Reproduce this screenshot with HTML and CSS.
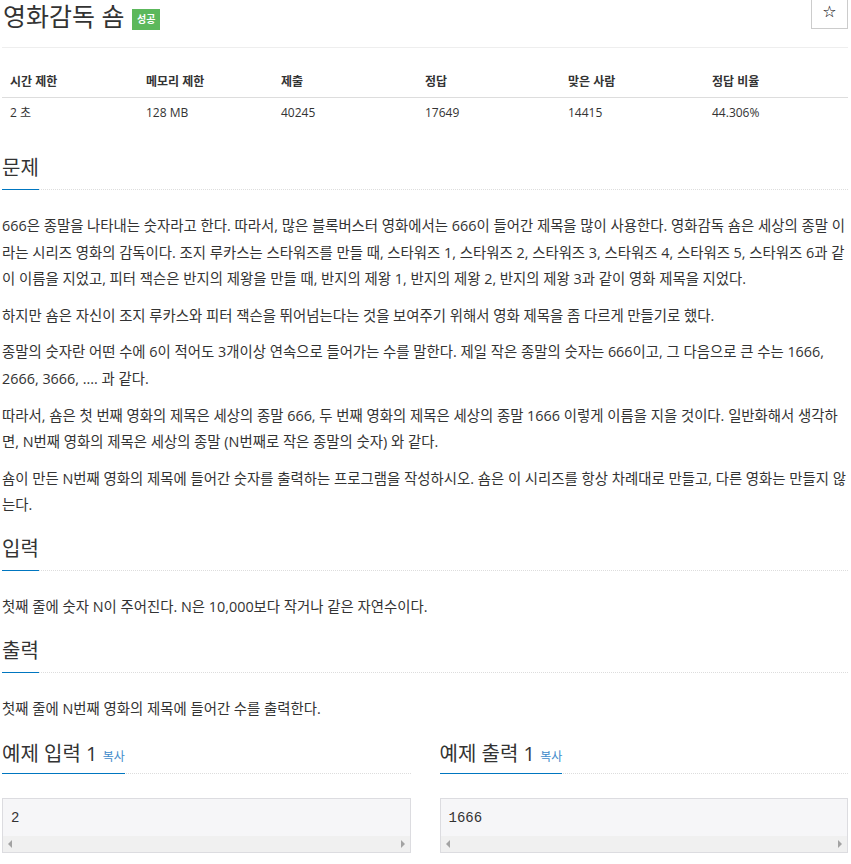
FILE: index.html
```html
<!DOCTYPE html>
<html lang="ko">
    <head>
        <meta charset="UTF-8">
        <meta name="viewport" content="width=device-width, initial-scale=1.0">
        <title>영화감독 숌</title>
        <link rel="stylesheet" href="styles.css">
    </head>
    <body>
        <div class="page">
            <div class="title-row">
                <h1 class="problem-title">영화감독 숌 <span class="label-success">성공</span></h1>
                <button class="star-btn" type="button">☆</button>
            </div>

            <table class="problem-info">
                <thead>
                    <tr>
                        <th>시간 제한</th>
                        <th>메모리 제한</th>
                        <th>제출</th>
                        <th>정답</th>
                        <th>맞은 사람</th>
                        <th>정답 비율</th>
                    </tr>
                </thead>
                <tbody>
                    <tr>
                        <td>2 초</td>
                        <td>128 MB</td>
                        <td>40245</td>
                        <td>17649</td>
                        <td>14415</td>
                        <td>44.306%</td>
                    </tr>
                </tbody>
            </table>

            <section class="problem-section">
                <div class="headline"><h2>문제</h2></div>
                <div class="problem-text">
                    <p>666은 종말을 나타내는 숫자라고 한다. 따라서, 많은 블록버스터 영화에서는 666이 들어간 제목을 많이 사용한다. 영화감독 숌은 세상의 종말 이라는 시리즈 영화의 감독이다. 조지 루카스는 스타워즈를 만들 때, 스타워즈 1, 스타워즈 2, 스타워즈 3, 스타워즈 4, 스타워즈 5, 스타워즈 6과 같이 이름을 지었고, 피터 잭슨은 반지의 제왕을 만들 때, 반지의 제왕 1, 반지의 제왕 2, 반지의 제왕 3과 같이 영화 제목을 지었다.</p>
                    <p>하지만 숌은 자신이 조지 루카스와 피터 잭슨을 뛰어넘는다는 것을 보여주기 위해서 영화 제목을 좀 다르게 만들기로 했다.</p>
                    <p>종말의 숫자란 어떤 수에 6이 적어도 3개이상 연속으로 들어가는 수를 말한다. 제일 작은 종말의 숫자는 666이고, 그 다음으로 큰 수는 1666, 2666, 3666, .... 과 같다.</p>
                    <p>따라서, 숌은 첫 번째 영화의 제목은 세상의 종말 666, 두 번째 영화의 제목은 세상의 종말 1666 이렇게 이름을 지을 것이다. 일반화해서 생각하면, N번째 영화의 제목은 세상의 종말 (N번째로 작은 종말의 숫자) 와 같다.</p>
                    <p>숌이 만든 N번째 영화의 제목에 들어간 숫자를 출력하는 프로그램을 작성하시오. 숌은 이 시리즈를 항상 차례대로 만들고, 다른 영화는 만들지 않는다.</p>
                </div>
            </section>

            <section class="problem-section">
                <div class="headline"><h2>입력</h2></div>
                <div class="problem-text">
                    <p>첫째 줄에 숫자 N이 주어진다. N은 10,000보다 작거나 같은 자연수이다.</p>
                </div>
            </section>

            <section class="problem-section">
                <div class="headline"><h2>출력</h2></div>
                <div class="problem-text">
                    <p>첫째 줄에 N번째 영화의 제목에 들어간 수를 출력한다.</p>
                </div>
            </section>

            <div class="samples">
                <section class="sample">
                    <div class="headline"><h2>예제 입력 1 <a href="#" class="copy-link">복사</a></h2></div>
                    <div class="sample-box">
                        <pre class="sample-data">2</pre>
                        <div class="fake-scroll"><span class="arrow-left"></span><span class="arrow-right"></span></div>
                    </div>
                </section>
                <section class="sample">
                    <div class="headline"><h2>예제 출력 1 <a href="#" class="copy-link">복사</a></h2></div>
                    <div class="sample-box">
                        <pre class="sample-data">1666</pre>
                        <div class="fake-scroll"><span class="arrow-left"></span><span class="arrow-right"></span></div>
                    </div>
                </section>
            </div>
        </div>
    </body>
</html>
```

FILE: styles.css
```css
/* Reset default styles */
* {
  margin: 0;
  padding: 0;
  box-sizing: border-box;
}

body {
  font-family: 'Open Sans', 'Noto Sans CJK KR', sans-serif;
  color: #333;
  background-color: #fff;
  font-size: 14px;
}

.page {
  width: 846px;
  margin-left: 2px;
}

/* Title */
.title-row {
  display: flex;
  justify-content: space-between;
  align-items: flex-start;
  padding-bottom: 15px;
  border-bottom: 1px solid #eee;
}

.problem-title {
  font-size: 25px;
  font-weight: normal;
  line-height: 32px;
  padding-left: 1px;
  color: #333;
}

.label-success {
  display: inline-block;
  vertical-align: 3px;
  background-color: #5cb85c;
  color: #fff;
  font-size: 10px;
  font-weight: bold;
  line-height: 13px;
  padding: 4px 5px;
  margin-left: 1px;
}

.star-btn {
  width: 37px;
  height: 30px;
  margin-top: -1px;
  border: 1px solid #ccc;
  background-color: #fff;
  color: #000;
  font-size: 16px;
  font-weight: bold;
  line-height: 20px;
  padding-bottom: 5px;
  font-family: 'DejaVu Sans', sans-serif;
}

/* Info table */
.problem-info {
  width: 100%;
  margin-top: 16px;
  border-collapse: collapse;
  table-layout: fixed;
  font-size: 12px;
}

.problem-info th,
.problem-info td {
  text-align: left;
  padding: 6px 8px 8px;
  line-height: 17px;
}

.problem-info th {
  font-weight: bold;
  padding-top: 9px;
  padding-bottom: 7px;
  border-bottom: 1px solid #ddd;
}

.problem-info th:nth-child(1) { width: 136px; }
.problem-info th:nth-child(2) { width: 135px; }
.problem-info th:nth-child(3) { width: 144px; }
.problem-info th:nth-child(4) { width: 143px; }
.problem-info th:nth-child(5) { width: 144px; }

/* Sections */
.problem-section {
  margin-top: 19px;
}

.problem-info + .problem-section {
  margin-top: 28px;
}

.headline {
  display: flex;
  border-bottom: 1px dotted #ddd;
}

.headline h2 {
  font-size: 20px;
  font-weight: normal;
  line-height: 22px;
  padding-bottom: 10px;
  border-bottom: 1px solid #0076c0;
  margin-bottom: -1px;
  color: #333;
}

.problem-text {
  margin-top: 23px;
  font-size: 14.4px;
  line-height: 26.6px;
}

.problem-text p {
  margin-bottom: 10px;
}

/* Samples */
.samples {
  display: grid;
  grid-template-columns: 1fr 1fr;
  column-gap: 29px;
  margin-top: 21px;
}

.sample .headline h2 {
  padding-bottom: 5px;
}

.copy-link {
  font-size: 12px;
  color: #428bca;
  text-decoration: none;
}

.sample-box {
  margin-top: 24px;
  border: 1px solid #dcdce0;
  background-color: #f6f6f8;
}

.sample-data {
  font-family: 'Liberation Mono', monospace;
  font-size: 14px;
  line-height: 20px;
  padding: 9px 8px 8px;
  color: #333;
}

.fake-scroll {
  height: 16px;
  background-color: #f0f0f0;
  display: flex;
  justify-content: space-between;
  align-items: center;
  padding: 0 5px;
}

.arrow-left,
.arrow-right {
  width: 0;
  height: 0;
  border-top: 4px solid transparent;
  border-bottom: 4px solid transparent;
}

.arrow-left {
  border-right: 4px solid #a3a3a3;
}

.arrow-right {
  border-left: 4px solid #a3a3a3;
}
```
